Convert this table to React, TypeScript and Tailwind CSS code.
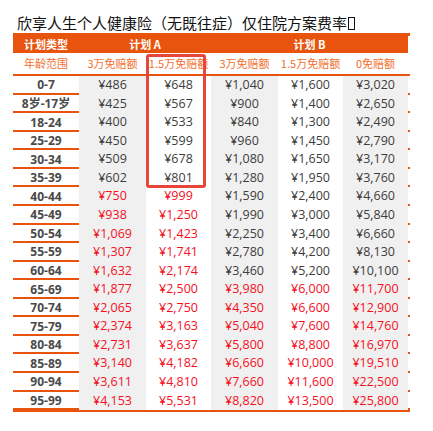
import React from "react";

type Row = { age: string; v: string[]; redA: boolean; redB: boolean };

const data: [string, string[]][] = [
  ["0-7", ["¥486", "¥648", "¥1,040", "¥1,600", "¥3,020"]],
  ["8岁-17岁", ["¥425", "¥567", "¥900", "¥1,400", "¥2,650"]],
  ["18-24", ["¥400", "¥533", "¥840", "¥1,300", "¥2,490"]],
  ["25-29", ["¥450", "¥599", "¥960", "¥1,450", "¥2,790"]],
  ["30-34", ["¥509", "¥678", "¥1,080", "¥1,650", "¥3,170"]],
  ["35-39", ["¥602", "¥801", "¥1,280", "¥1,950", "¥3,760"]],
  ["40-44", ["¥750", "¥999", "¥1,590", "¥2,400", "¥4,660"]],
  ["45-49", ["¥938", "¥1,250", "¥1,990", "¥3,000", "¥5,840"]],
  ["50-54", ["¥1,069", "¥1,423", "¥2,250", "¥3,400", "¥6,660"]],
  ["55-59", ["¥1,307", "¥1,741", "¥2,780", "¥4,200", "¥8,130"]],
  ["60-64", ["¥1,632", "¥2,174", "¥3,460", "¥5,200", "¥10,100"]],
  ["65-69", ["¥1,877", "¥2,500", "¥3,980", "¥6,000", "¥11,700"]],
  ["70-74", ["¥2,065", "¥2,750", "¥4,350", "¥6,600", "¥12,900"]],
  ["75-79", ["¥2,374", "¥3,163", "¥5,040", "¥7,600", "¥14,760"]],
  ["80-84", ["¥2,731", "¥3,637", "¥5,800", "¥8,800", "¥16,970"]],
  ["85-89", ["¥3,140", "¥4,182", "¥6,660", "¥10,000", "¥19,510"]],
  ["90-94", ["¥3,611", "¥4,810", "¥7,660", "¥11,600", "¥22,500"]],
  ["95-99", ["¥4,153", "¥5,531", "¥8,820", "¥13,500", "¥25,800"]],
];

const rows: Row[] = data.map(([age, v], i) => ({
  age,
  v,
  redA: i >= 6,
  redB: i >= 11,
}));

const gridCols = "grid grid-cols-[66px_67px_65px_67px_65px_65px] w-[395px]";

export default function App() {
  return (
    <div className="w-[433px] h-[431px] bg-white px-[13px] font-['Open_Sans','Noto_Sans_CJK_SC',sans-serif]">
      <div className="pt-[13px] pl-[4px] h-[33px] text-[15px] leading-[20px] text-[#111] font-['Noto_Sans_CJK_SC',sans-serif] whitespace-nowrap flex items-center">
        欣享人生个人健康险（无既往症）仅住院方案费率
        <span className="inline-block w-[7px] h-[13px] border border-[#111] ml-[1px]"></span>
      </div>
      <div className="relative w-[397px]">
        <div className="h-[3px] w-[397px] bg-[#e8540d]"></div>
        <div className={`${gridCols} h-[17px] bg-[#e8540d] text-white font-bold text-[11px] items-center font-['Noto_Sans_CJK_SC',sans-serif]`}>
          <div className="text-center leading-[17px]">计划类型</div>
          <div className="col-span-2 text-center leading-[17px]">计划 A</div>
          <div className="col-span-3 text-center leading-[17px]">计划 B</div>
        </div>
        <div className="w-[397px] h-[23px] border-b-2 border-[#e8540d]">
          <div className={`${gridCols} h-full items-center text-[11px] text-[#f2702f] font-['Noto_Sans_CJK_SC',sans-serif]`}>
            <div className="text-center">年龄范围</div>
            <div className="text-center">3万免赔额</div>
            <div className="text-center whitespace-nowrap">1.5万免赔额</div>
            <div className="text-center">3万免赔额</div>
            <div className="text-center whitespace-nowrap">1.5万免赔额</div>
            <div className="text-center">0免赔额</div>
          </div>
        </div>
        {rows.map((r, i) => {
          const last = i === rows.length - 1;
          return (
            <div
              key={r.age}
              className={
                last
                  ? "w-[397px] h-[20.4px] border-b-4 border-[#e8540d]"
                  : "w-[397px] h-[18.57px] border-b-2 border-[#e8540d]"
              }
            >
              <div className={`${gridCols} h-full text-[12.5px]`}>
                <div className="flex items-center justify-center font-bold text-[12px] text-[#4a4a4a] font-['Open_Sans','Noto_Sans_CJK_SC',sans-serif]">
                  {r.age}
                </div>
                {r.v.map((val, j) => {
                  const red = j < 2 ? r.redA : r.redB;
                  const gray = j % 2 === 0;
                  return (
                    <div
                      key={j}
                      className={`flex items-center justify-center ${gray ? "bg-[#f0f0f0]" : "bg-white"} ${red ? "text-[#f5101e]" : "text-[#3d3d3d]"}`}
                    >
                      {val}
                    </div>
                  );
                })}
              </div>
            </div>
          );
        })}
        <div className="absolute left-[133px] top-[21px] w-[60px] h-[134px] border-[3px] border-[#e8463a] rounded-[3px] pointer-events-none"></div>
      </div>
    </div>
  );
}
